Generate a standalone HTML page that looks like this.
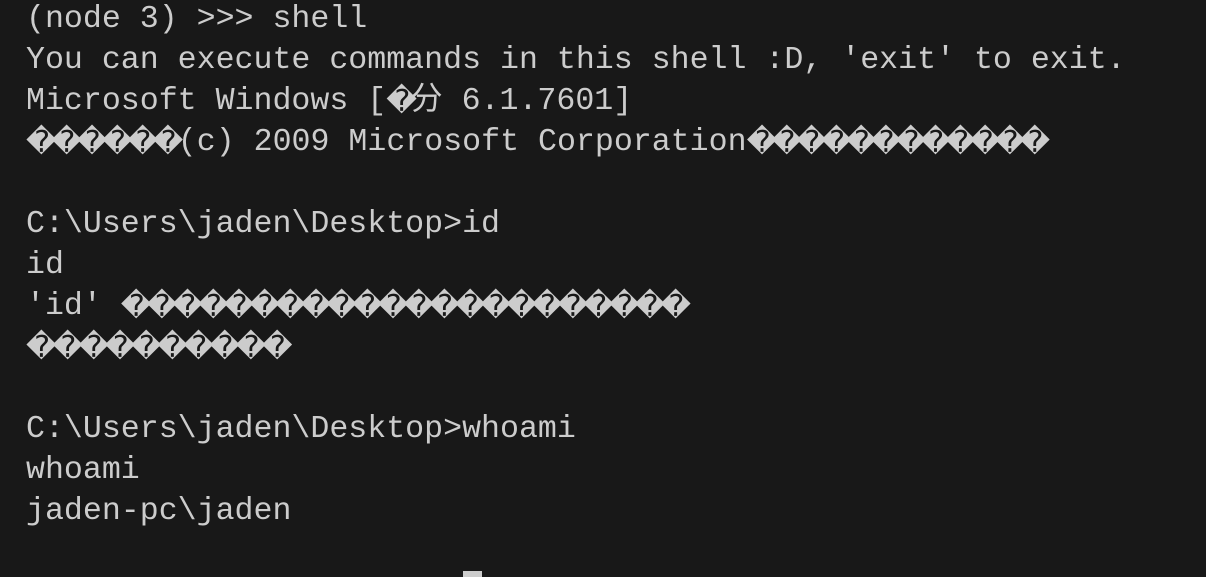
<!DOCTYPE html>
<html><head><meta charset="utf-8"><style>
html,body{margin:0;padding:0;background:#181818;width:1206px;height:577px;overflow:hidden}
.t{position:absolute;left:26px;top:-1px;font-family:"Liberation Mono","DejaVu Sans Mono",monospace;font-size:31.6px;color:#cccccc}
.t div{height:41px;line-height:41px;overflow:visible;white-space:pre}
.d{display:inline-block;width:24.8px;height:41px;line-height:41px;vertical-align:top;overflow:visible;font-family:"DejaVu Sans",sans-serif;font-size:30px;text-align:center}
.a .d{width:25.3px}
.b .d{width:25.7px}
.c .d{width:26.2px}
.cur{position:absolute;left:463px;top:571px;width:19px;height:6px;background:#cccccc}
</style></head><body>
<div class="t"><div>(node 3) &gt;&gt;&gt; shell</div><div>You can execute commands in this shell :D, 'exit' to exit.</div><div>Microsoft Windows [<span class="d">�</span>分 6.1.7601]</div><div><span class="a"><span class="d">�</span><span class="d">�</span><span class="d">�</span><span class="d">�</span><span class="d">�</span><span class="d">�</span></span>(c) 2009 Microsoft Corporation<span class="d">�</span><span class="d">�</span><span class="d">�</span><span class="d">�</span><span class="d">�</span><span class="d">�</span><span class="d">�</span><span class="d">�</span><span class="d">�</span><span class="d">�</span><span class="d">�</span><span class="d">�</span></div><div> </div><div>C:\Users\jaden\Desktop&gt;id</div><div>id</div><div class="b">'id' <span class="d">�</span><span class="d">�</span><span class="d">�</span><span class="d">�</span><span class="d">�</span><span class="d">�</span><span class="d">�</span><span class="d">�</span><span class="d">�</span><span class="d">�</span><span class="d">�</span><span class="d">�</span><span class="d">�</span><span class="d">�</span><span class="d">�</span><span class="d">�</span><span class="d">�</span><span class="d">�</span><span class="d">�</span><span class="d">�</span><span class="d">�</span><span class="d">�</span></div><div class="c"><span class="d">�</span><span class="d">�</span><span class="d">�</span><span class="d">�</span><span class="d">�</span><span class="d">�</span><span class="d">�</span><span class="d">�</span><span class="d">�</span><span class="d">�</span></div><div> </div><div>C:\Users\jaden\Desktop&gt;whoami</div><div>whoami</div><div>jaden-pc\jaden</div></div>
<div class="cur"></div>
</body></html>
